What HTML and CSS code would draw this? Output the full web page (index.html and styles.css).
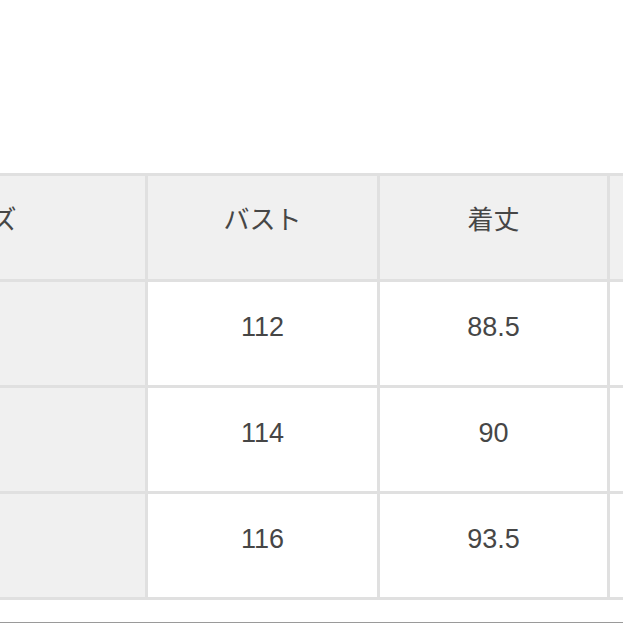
FILE: index.html
```html
<!DOCTYPE html>
<html lang="ja">
<head>
<meta charset="utf-8">
<link rel="stylesheet" href="styles.css">
</head>
<body>
<div class="page">
  <div class="size-table">
    <div class="cell head">サイズ</div>
    <div class="cell head">バスト</div>
    <div class="cell head">着丈</div>
    <div class="cell head">袖丈</div>

    <div class="cell label">M</div>
    <div class="cell">112</div>
    <div class="cell">88.5</div>
    <div class="cell">56</div>

    <div class="cell label">L</div>
    <div class="cell">114</div>
    <div class="cell">90</div>
    <div class="cell">57</div>

    <div class="cell label">XL</div>
    <div class="cell">116</div>
    <div class="cell">93.5</div>
    <div class="cell">58</div>
  </div>
  <div class="bottom-rule"></div>
</div>
</body>
</html>
```

FILE: styles.css
```css
html, body {
  margin: 0;
  padding: 0;
  background: #ffffff;
  overflow: hidden;
}

.page {
  width: 623px;
  height: 623px;
  overflow: hidden;
  padding-top: 173px;
  box-sizing: border-box;
  font-family: "Liberation Sans", "Noto Sans CJK JP", sans-serif;
  color: #464646;
}

.size-table {
  display: grid;
  grid-template-columns: 334px 229px 227px 229px;
  grid-auto-rows: 103px;
  gap: 3px;
  padding: 3px;
  background: #e0e0e0;
  width: max-content;
  margin-left: -192px;
}

.cell {
  display: flex;
  align-items: center;
  justify-content: center;
  padding-bottom: 13px;
  box-sizing: border-box;
  background: #ffffff;
  font-size: 27px;
  line-height: 1;
}

.cell.head {
  font-size: 26px;
  padding-bottom: 16px;
}

.cell.head,
.cell.label {
  background: #f0f0f0;
}

.bottom-rule {
  margin-top: 22px;
  height: 1px;
  background: #9a9a9a;
}
```
